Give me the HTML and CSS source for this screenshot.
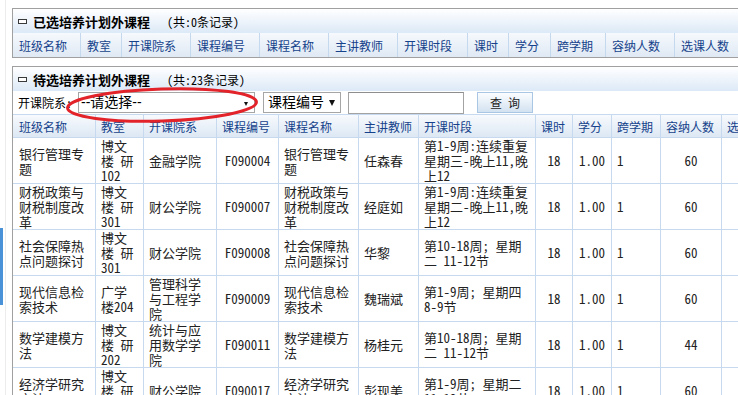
FILE: index.html
```html
<!DOCTYPE html>
<html lang="zh-CN">
<head>
<meta charset="utf-8">
<title>培养计划外课程</title>
<link rel="stylesheet" href="styles.css">
</head>
<body>
<div class="edge"></div>
<div class="handle"></div>

<div class="panel">
  <div class="panel-title"><span class="collapse"></span><b class="title-text">已选培养计划外课程</b><span class="count">(共:0条记录)</span></div>
  <table class="head-grid">
    <colgroup>
      <col style="width:67px"><col style="width:41px"><col style="width:69px"><col style="width:69px"><col style="width:69px"><col style="width:69px"><col style="width:70px"><col style="width:41px"><col style="width:42px"><col style="width:55px"><col style="width:69px"><col style="width:69px">
    </colgroup>
    <tr>
      <th>班级名称</th><th>教室</th><th>开课院系</th><th>课程编号</th><th>课程名称</th><th>主讲教师</th><th>开课时段</th><th>课时</th><th>学分</th><th>跨学期</th><th>容纳人数</th><th>选课人数</th>
    </tr>
  </table>
</div>

<div class="panel">
  <div class="panel-title"><span class="collapse"></span><b class="title-text">待选培养计划外课程</b><span class="count">(共:23条记录)</span></div>
  <div class="filter">
    <span class="filter-label">开课院系:</span>
    <span class="select select-dept"><span class="select-text">--请选择--</span><span class="arrow arrow-sm"></span></span>
    <span class="select select-field"><span class="select-text">课程编号</span><span class="arrow arrow-lg"></span></span>
    <input class="search-input" type="text">
    <button class="search-btn" type="button">查 询</button>
  </div>
  <table class="grid">
    <colgroup>
      <col style="width:83px"><col style="width:48px"><col style="width:73px"><col style="width:62px"><col style="width:80px"><col style="width:60px"><col style="width:117px"><col style="width:37px"><col style="width:39px"><col style="width:49px"><col style="width:61px"><col style="width:70px">
    </colgroup>
    <tr>
      <th>班级名称</th><th>教室</th><th>开课院系</th><th>课程编号</th><th>课程名称</th><th>主讲教师</th><th>开课时段</th><th>课时</th><th>学分</th><th>跨学期</th><th>容纳人数</th><th>选课人数</th>
    </tr>
    <tr>
      <td>银行管理专题</td><td>博文楼 研102</td><td>金融学院</td><td class="c">F090004</td><td>银行管理专题</td><td>任森春</td><td>第1-9周:连续重复星期三-晚上11,晚上12</td><td class="c">18</td><td class="c">1.00</td><td>1</td><td class="c">60</td><td></td>
    </tr>
    <tr>
      <td>财税政策与财税制度改革</td><td>博文楼 研301</td><td>财公学院</td><td class="c">F090007</td><td>财税政策与财税制度改革</td><td>经庭如</td><td>第1-9周:连续重复星期二-晚上11,晚上12</td><td class="c">18</td><td class="c">1.00</td><td>1</td><td class="c">60</td><td></td>
    </tr>
    <tr>
      <td>社会保障热点问题探讨</td><td>博文楼 研301</td><td>财公学院</td><td class="c">F090008</td><td>社会保障热点问题探讨</td><td>华黎</td><td>第10-18周; 星期二 11-12节</td><td class="c">18</td><td class="c">1.00</td><td>1</td><td class="c">60</td><td></td>
    </tr>
    <tr>
      <td>现代信息检索技术</td><td>广学楼204</td><td>管理科学与工程学院</td><td class="c">F090009</td><td>现代信息检索技术</td><td>魏瑞斌</td><td>第1-9周; 星期四 8-9节</td><td class="c">18</td><td class="c">1.00</td><td>1</td><td class="c">60</td><td></td>
    </tr>
    <tr>
      <td>数学建模方法</td><td>博文楼 研202</td><td>统计与应用数学学院</td><td class="c">F090011</td><td>数学建模方法</td><td>杨桂元</td><td>第10-18周; 星期二 11-12节</td><td class="c">18</td><td class="c">1.00</td><td>1</td><td class="c">44</td><td></td>
    </tr>
    <tr>
      <td>经济学研究方法</td><td>博文楼 研301</td><td>财公学院</td><td class="c">F090017</td><td>经济学研究方法</td><td>彭现美</td><td>第1-9周; 星期二 11-12节</td><td class="c">18</td><td class="c">1.00</td><td>1</td><td class="c">60</td><td></td>
    </tr>
  </table>
</div>

<svg class="annot" width="200" height="42" viewBox="0 0 200 42" aria-hidden="true">
  <ellipse cx="98" cy="19" rx="94.5" ry="16" fill="none" stroke="#e3232a" stroke-width="3" transform="rotate(-1.8 98 19)"/>
</svg>
</body>
</html>
```

FILE: styles.css
```css
html, body {
  margin: 0;
  background: #ffffff;
}
body {
  padding: 8px 0 0 12px;
  font-family: "Noto Sans Mono CJK SC", "Noto Sans CJK SC", sans-serif;
  font-size: 13px;
  color: #222222;
  overflow: hidden;
  position: relative;
  height: 387px;
}

.edge {
  position: absolute;
  left: 5px;
  top: 0;
  width: 1px;
  height: 100%;
  background: #ececec;
}
.handle {
  position: absolute;
  left: 0;
  top: 228px;
  width: 3px;
  height: 77px;
  background: #4a92d8;
}

.panel {
  width: 790px;
  border: 1px solid #a0a0a0;
}
.panel + .panel {
  margin-top: 8px;
}

.panel-title {
  height: 24px;
  display: flex;
  align-items: center;
  padding-left: 5px;
  background: linear-gradient(#ffffff, #dce9f7);
}
.collapse {
  width: 7px;
  height: 3px;
  border: 1px solid #3a3a3a;
  background: #ffffff;
  margin-right: 6px;
}
.title-text {
  font-size: 13px;
  font-weight: bold;
  color: #000000;
}
.count {
  font-size: 12px;
  margin-left: 17px;
  color: #000000;
}

.head-grid,
.grid {
  table-layout: fixed;
  border-collapse: separate;
  border-spacing: 0;
}
.head-grid {
  width: 730px;
}
.grid {
  width: 779px;
}

.head-grid th {
  height: 24px;
  padding: 0 0 0 6px;
  text-align: left;
  font-weight: normal;
  font-size: 12px;
  color: #15428b;
  white-space: nowrap;
  overflow: hidden;
  background: linear-gradient(#f6f9fd, #dfe9f4);
  border-left: 1px solid #c4d8ee;
}
.head-grid th:first-child {
  border-left: none;
}

.filter {
  height: 23px;
  display: flex;
  align-items: center;
  padding-left: 5px;
  background: #ffffff;
}
.filter-label {
  font-size: 12px;
  color: #000000;
  width: 56px;
  margin-right: 4px;
  white-space: nowrap;
}
.select {
  position: relative;
  display: flex;
  align-items: center;
  height: 19px;
  border: 1px solid #a6a6a6;
  background: #ffffff;
  font-family: "Liberation Sans", "Noto Sans CJK SC", sans-serif;
  font-size: 14px;
  color: #000000;
}
.select-text {
  line-height: 19px;
}
.select-dept {
  width: 173px;
  padding-left: 2px;
}
.select-field {
  width: 72px;
  padding-left: 4px;
  margin-left: 8px;
}
.arrow {
  position: absolute;
  width: 0;
  height: 0;
  border-style: solid;
  border-color: #111111 transparent transparent transparent;
}
.arrow-sm {
  right: 6px;
  top: 9px;
  border-width: 4px 2px 0 2px;
}
.arrow-lg {
  right: 5px;
  top: 7px;
  border-width: 6px 3px 0 3px;
}
.search-input {
  box-sizing: border-box;
  width: 116px;
  height: 22px;
  margin: 0 0 0 7px;
  padding: 0 2px;
  border: 1px solid #a3a3a3;
  border-top-color: #8e8e8e;
  background: #ffffff;
  font: inherit;
}
.search-btn {
  box-sizing: border-box;
  width: 56px;
  height: 21px;
  margin-left: 13px;
  padding: 0;
  border: 1px solid #a9c7e4;
  background: linear-gradient(#fbfdff, #d3e2f1);
  font-family: inherit;
  font-size: 12px;
  color: #222222;
}

.grid th {
  height: 22px;
  padding: 0 0 0 5px;
  text-align: left;
  font-weight: normal;
  font-size: 12px;
  color: #15428b;
  white-space: nowrap;
  overflow: hidden;
  background: linear-gradient(#f7fafd, #dde8f4);
  border-top: 1px solid #c6d9ee;
  border-bottom: 1px solid #c6d9ee;
  border-right: 1px solid #c6d9ee;
}
.grid td {
  height: 45px;
  padding: 0 5px;
  line-height: 15px;
  font-size: 13px;
  color: #222222;
  vertical-align: middle;
  text-align: left;
  border-bottom: 1px solid #c6d9ee;
  border-right: 1px solid #c6d9ee;
}
.grid th:first-child,
.grid td:first-child {
  padding-left: 6px;
}
.grid td.c {
  text-align: center;
}

.annot {
  position: absolute;
  left: 64px;
  top: 86px;
  pointer-events: none;
}
```
